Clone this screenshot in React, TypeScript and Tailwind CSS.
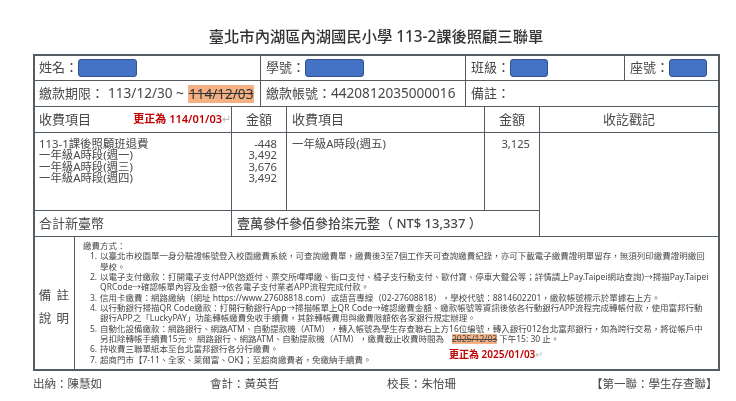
const Mask = ({ className }: { className: string }) => (
  <span className={`inline-block h-[18px] rounded-[3px] border border-[#2f528f] bg-[#4472c4] ${className}`} />
);

const notes = [
  { n: "1.", lines: ["以臺北市校園單一身分驗證帳號登入校園繳費系統\uFF0C可查詢繳費單\uFF0C繳費後3至7個工作天可查詢繳費紀錄\uFF0C亦可下載電子繳費證明單留存\uFF0C無須列印繳費證明繳回", "學校。"] },
  { n: "2.", lines: ["以電子支付繳款\uFF1A打開電子支付APP(悠遊付、票交所嗶嗶繳、街口支付、橘子支行動支付、歐付寶、停車大聲公等\uFF1B詳情請上Pay.Taipei網站查詢)→掃描Pay.Taipei", "QRCode→確認帳單內容及金額→依各電子支付業者APP流程完成付款。"] },
  { n: "3.", lines: ["信用卡繳費\uFF1A網路繳納\uFF08網址 https://www.27608818.com\uFF09或語音專線\uFF0802-27608818\uFF09\uFF0C學校代號\uFF1A8814602201\uFF0C繳款帳號標示於單據右上方。"] },
  { n: "4.", lines: ["以行動銀行掃描QR Code繳款\uFF1A打開行動銀行App→掃描帳單上QR Code→確認繳費金額、繳款帳號等資訊後依各行動銀行APP流程完成轉帳付款\uFF0C使用富邦行動", "銀行APP之「LuckyPAY」功能轉帳繳費免收手續費\uFF0C其餘轉帳費用與繳費限額依各家銀行規定辦理。"] },
  { n: "5.", lines: ["自動化設備繳款\uFF1A網路銀行、網路ATM、自動提款機\uFF08ATM\uFF09\uFF0C轉入帳號為學生存查聯右上方16位編號\uFF0C轉入銀行012台北富邦銀行\uFF0C如為跨行交易\uFF0C將從帳戶中"] },
];

export default function App() {
  return (
    <div className="relative h-[401px] w-[736px] overflow-hidden bg-white text-[#484848] [font-family:'Noto_Sans','Noto_Sans_CJK_TC',sans-serif] blur-[0.35px]">
      <h1 className="flex h-[54px] items-end justify-center pb-[8px] pl-[16px] text-[15.3px] leading-[20px] font-medium text-[#333]">
        臺北市內湖區內湖國民小學 113-2課後照顧三聯單
      </h1>

      <div className="ml-[33px] w-[687px] border-2 border-[#555b63] text-[13px]">
        <div className="flex h-[25px] items-center border-b border-[#555b63]">
          <div className="flex h-full w-[226px] items-center border-r border-[#555b63] pl-[4px]">{"姓名\uFF1A"}<Mask className="w-[59px]" /></div>
          <div className="flex h-full w-[205px] items-center border-r border-[#555b63] pl-[5px]">{"學號\uFF1A"}<Mask className="w-[59px]" /></div>
          <div className="flex h-full w-[159px] items-center border-r border-[#555b63] pl-[5px]">{"班級\uFF1A"}<Mask className="w-[38px]" /></div>
          <div className="flex h-full flex-1 items-center pl-[5px]">{"座號\uFF1A"}<Mask className="w-[38px]" /></div>
        </div>

        <div className="flex h-[26px] items-center border-b border-[#555b63]">
          <div className="flex h-full w-[226px] items-center whitespace-nowrap border-r border-[#555b63] pl-[4px]">
            {"繳款期限\uFF1A"}
            <span className="ml-[4px] text-[13.6px]">113/12/30 ~</span>
            <span className="ml-[4px] bg-[#f4b183] px-[1px] text-[13.6px] leading-[18px] text-[#333] [text-decoration:line-through] decoration-[#c00000]">114/12/03</span>
          </div>
          <div className="flex h-full w-[205px] items-center border-r border-[#555b63] pl-[5px] whitespace-nowrap">
            {"繳款帳號\uFF1A"}<span className="text-[13.6px]">4420812035000016</span>
          </div>
          <div className="flex h-full flex-1 items-center pl-[5px]">{"備註\uFF1A"}</div>
        </div>

        <div className="grid grid-cols-[197px_55px_198px_55px_1fr] grid-rows-[26px_78px_26px]">
          <div className="flex items-center justify-between border-r border-b border-[#555b63] pl-[4px]">
            收費項目
            <span className="whitespace-nowrap text-[11px] font-semibold text-[#c00000]">更正為 114/01/03<span className="font-normal text-[#bbb]">↵</span></span>
          </div>
          <div className="flex items-center justify-center border-r border-b border-[#555b63]">金額</div>
          <div className="flex items-center border-r border-b border-[#555b63] pl-[5px]">收費項目</div>
          <div className="flex items-center justify-center border-r border-b border-[#555b63]">金額</div>
          <div className="flex items-center justify-center border-b border-[#555b63]">收訖戳記</div>

          <div className="border-r border-b border-[#555b63] pt-[5px] pl-[4px] text-[11.4px] leading-[11.4px]">
            <div>113-1課後照顧班退費</div>
            <div>一年級A時段(週一)</div>
            <div>一年級A時段(週三)</div>
            <div>一年級A時段(週四)</div>
          </div>
          <div className="border-r border-b border-[#555b63] pt-[5px] pr-[9px] text-right text-[11.2px] leading-[11.4px]">
            <div>-448</div>
            <div>3,492</div>
            <div>3,676</div>
            <div>3,492</div>
          </div>
          <div className="border-r border-b border-[#555b63] pt-[5px] pl-[5px] text-[11.4px] leading-[11.4px]">一年級A時段(週五)</div>
          <div className="border-r border-b border-[#555b63] pt-[5px] pr-[9px] text-right text-[11.2px] leading-[11.4px]">3,125</div>
          <div className="row-span-2 border-b border-[#555b63]" />

          <div className="flex items-center border-r border-b border-[#555b63] pl-[4px]">合計新臺幣</div>
          <div className="col-span-3 flex items-center border-r border-b border-[#555b63] pl-[5px] font-medium whitespace-pre">
            {"壹萬參仟參佰參拾柒元整\uFF08 NT$ 13,337 \uFF09"}
          </div>
        </div>

        <div className="flex h-[132px]">
          <div className="flex w-[40px] flex-col items-center justify-center border-r border-[#555b63] pt-[7px] text-[12.5px] leading-[23px] tracking-[1px]">
            <div>備 註</div>
            <div>說 明</div>
          </div>
          <div className="relative flex-1 pt-[4px] pl-[8px] text-[8.5px] leading-[10.35px] whitespace-nowrap">
            <div>{"繳費方式\uFF1A"}</div>
            {notes.map((note) => (
              <div key={note.n} className="flex pl-[7px]">
                <span className="w-[10px] shrink-0">{note.n}</span>
                <div>
                  {note.lines.map((line) => (
                    <div key={line}>{line}</div>
                  ))}
                </div>
              </div>
            ))}
            <div className="flex pl-[17px]">
              {"另扣除轉帳手續費15元。 網路銀行、網路ATM、自動提款機\uFF08ATM\uFF09\uFF0C繳費截止收費時間為"}
              <span className="mr-[2px] ml-[8px] bg-[#f4b183] [text-decoration:line-through] decoration-[#c00000]">2025/12/03</span>
              下午15: 30 止。
            </div>
            <div className="flex pl-[7px]"><span className="w-[10px] shrink-0">6.</span>持收費三聯單紙本至台北富邦銀行各分行繳費。</div>
            <div className="flex pl-[7px]"><span className="w-[10px] shrink-0">7.</span>{"超商門市【7-11、全家、萊爾富、OK】\uFF1B至超商繳費者\uFF0C免繳納手續費。"}</div>
            <span className="absolute top-[111px] left-[374px] text-[10px] leading-[12px] font-semibold text-[#c00000]">更正為 2025/01/03<span className="font-normal text-[#bbb]">↵</span></span>
          </div>
        </div>
      </div>

      <div className="mt-[5px] flex text-[11.5px] leading-[16px]">
        <div className="ml-[33px] w-[177px]">{"出納\uFF1A陳慧如"}</div>
        <div className="w-[177px]">{"會計\uFF1A黃英哲"}</div>
        <div className="w-[204px]">{"校長\uFF1A朱怡珊"}</div>
        <div className="whitespace-nowrap">{"【第一聯\uFF1A學生存查聯】"}</div>
      </div>
    </div>
  );
}
